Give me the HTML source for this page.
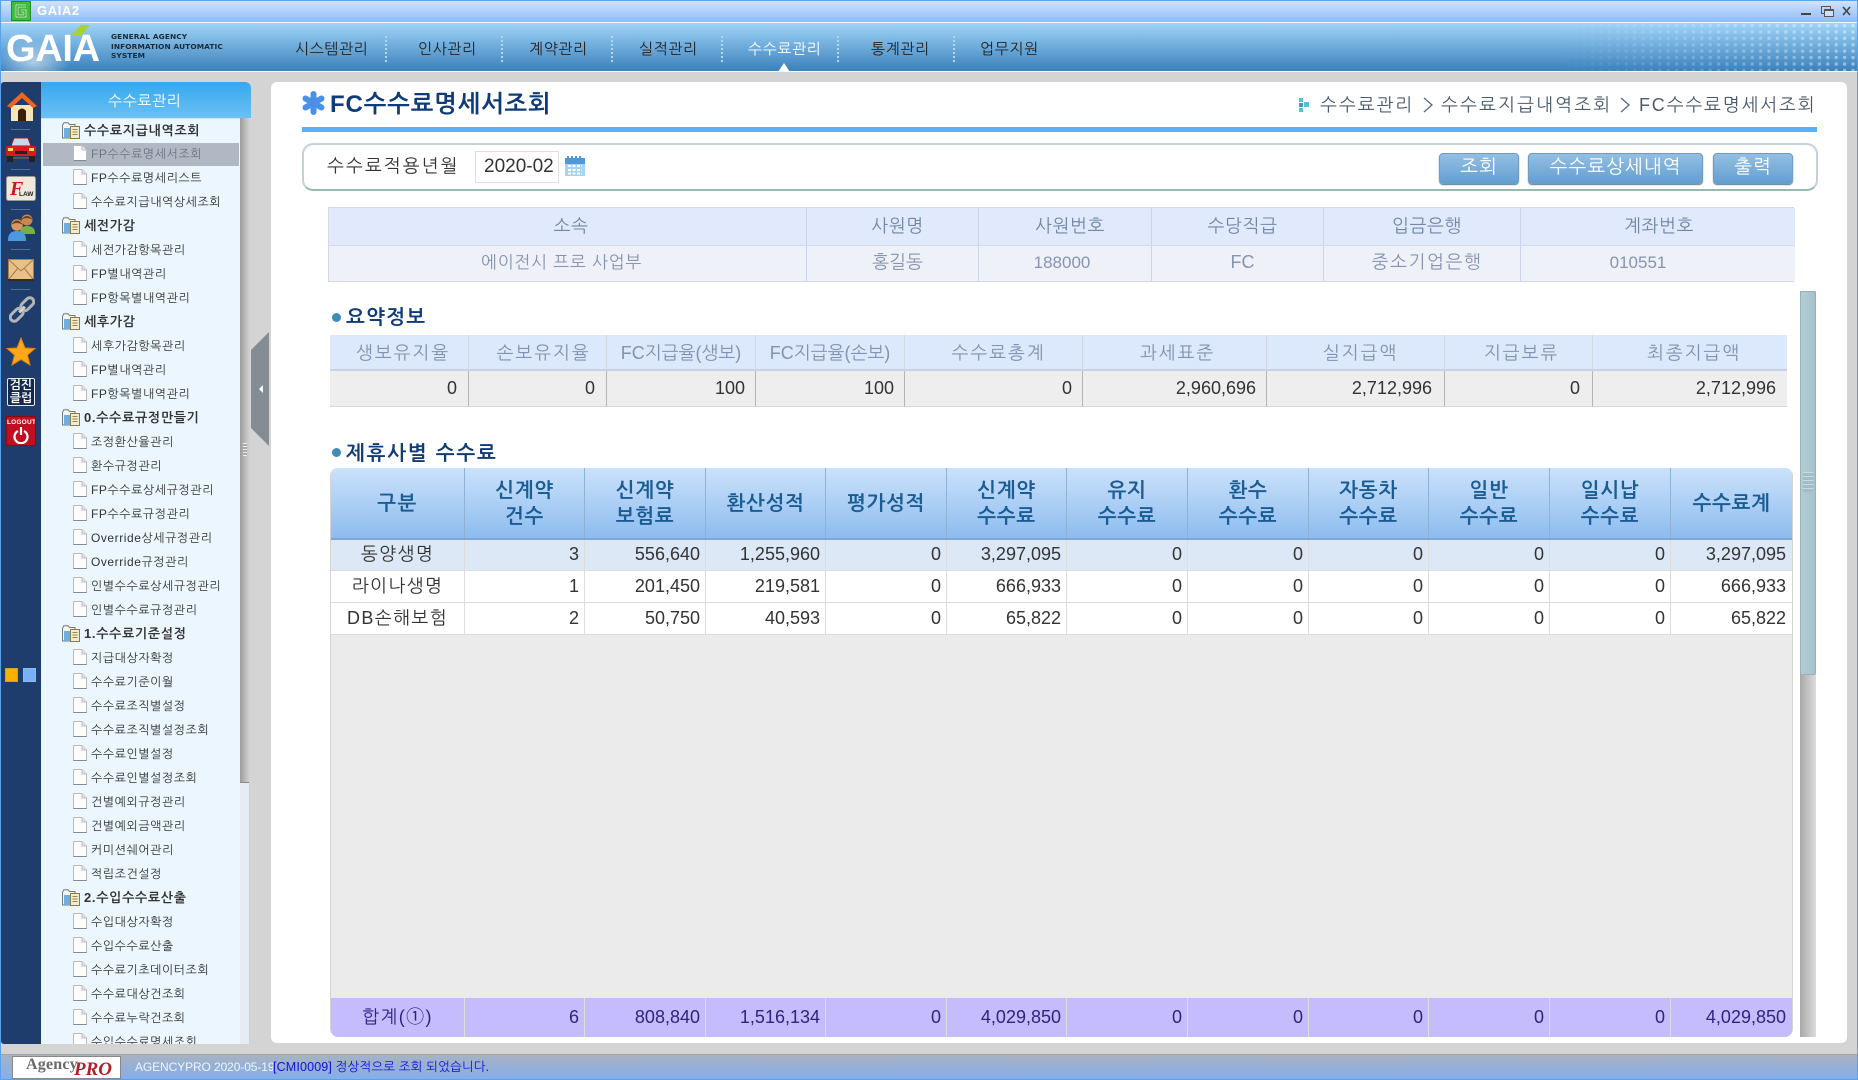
<!DOCTYPE html>
<html lang="ko"><head><meta charset="utf-8"><title>GAIA2</title>
<style>
*{box-sizing:border-box}
html,body{margin:0;padding:0;width:1858px;height:1080px;overflow:hidden;background:#d4d4d4;font-family:"Liberation Sans","NanumGothic","Noto Sans CJK KR",sans-serif;color:#333}
.a{position:absolute;white-space:nowrap}
.c{position:absolute;height:30px;line-height:30px;white-space:nowrap}
.m{font-size:15px;color:#222;top:35px;letter-spacing:.6px}
.sep{position:absolute;top:36px;height:26px;width:0;border-left:2px dotted #b8d4ea}
#tree{position:absolute;left:41px;top:119px;width:199px;height:925px;background:#ebf6ff;overflow:hidden}
#tree div{height:24px;line-height:24px;white-space:nowrap;position:relative;font-size:12px;padding-left:50px;color:#333;letter-spacing:.55px}
#tree div.h{font-size:13px;font-weight:bold;padding-left:43px;color:#333;letter-spacing:.7px}
#tree svg{position:absolute}
#tree div svg{left:32px;top:3px}
#tree div.h svg{left:21px;top:3px}
.g{position:absolute;display:grid}
.g>div{overflow:hidden;white-space:nowrap}
#info{left:328px;top:207px;width:1466px;grid-template-columns:477px 172px 173px 172px 197px 275px;background:#e0eafc;border:1px solid #d4dae4;font-size:18px;color:#7286a8}
#info>div{text-align:center;padding-left:10px;border-left:1px solid #cdd6e4}
#info .h{height:38px;line-height:36px;background:#e0eafc;border-bottom:1px solid #d4dcec;letter-spacing:.6px}
#info .d{height:35px;line-height:33px;background:#eef1f8;color:#8694ae}
#sum{left:330px;top:335px;width:1457px;grid-template-columns:138px 138px 149px 149px 178px 184px 178px 148px 195px;font-size:18px}
#sum>div{border-left:1px solid #d2d8e2}
#sum .h{height:36px;line-height:36px;background:#dce8fb;color:#8292b2;text-align:center;letter-spacing:1.900px;border-bottom:2px solid #c8d2e0}
#sum .d{height:36px;line-height:34px;background:#eeeeee;text-align:right;padding-right:10px;color:#333;border-left:1px solid #b4b4b4;border-bottom:1px solid #d8d8d8}
#grid{left:330px;top:468px;width:1463px;height:569px;background:#ebebeb;border-left:1px solid #d4d4d4;border-right:1px solid #d4d4d4;border-radius:8px;overflow:hidden}
.row{position:absolute;left:0;width:1463px;display:grid;grid-template-columns:133px 120px 121px 120px 121px 120px 121px 121px 120px 121px 121px 122px}
.row>div{white-space:nowrap;overflow:hidden;border-left:1px solid #ddd;text-align:right;padding-right:5px;font-size:18px;color:#333}
.row>div:first-child{text-align:center;padding-right:0;border-left:none;letter-spacing:1.400px}
.row>div:last-child{padding-right:6px}
.hd{top:0;height:72px;background:linear-gradient(#cbe2fb,#8dbcef);border-bottom:2px solid #7fa8d0}
.hd>div{display:flex;flex-direction:column;justify-content:center;align-items:center;padding:2px 0 0 !important;border-left:1px solid #8fb2d4;font-size:20px;font-weight:bold;color:#1c5c94;line-height:26px;text-align:center;letter-spacing:.7px}
.r{height:32px;line-height:30px;background:#fff;border-bottom:1px solid #dcdcdc}
.t{top:530px;height:39px;line-height:39px;background:#c4bcfc}
.t>div{color:#2e2380;border-left:1px solid #dcdcd8}
.btn{position:absolute;top:153px;height:31px;line-height:28px;text-align:center;color:#fff;font-size:19px;border-radius:4px;background:linear-gradient(#94bfe2,#629fd2);border:1px solid #6f9cc2;box-shadow:0 1px 1px #5a7a9c;letter-spacing:1px}
.hr{position:absolute;left:11px;width:19px;height:1px;background:#56708f}
</style></head>
<body>
<svg width="0" height="0" style="position:absolute"><defs>
<symbol id="doc" viewBox="0 0 14 16"><path d="M.5.5H9L13.500 5V15.500H.5Z" fill="#fdfdfd" stroke="#bbb"/><path d="M9 .5V5H13.500" fill="#e8e8e8" stroke="#bbb"/><path d="M.5 15.500H13.500" stroke="#888"/></symbol>
<symbol id="fold" viewBox="0 0 18 17"><path d="M.5 16V3L2 .8H6L7.500 2.500H13V16Z" fill="#f4f4f4" stroke="#777"/><path d="M2 16V6H8V16Z" fill="#6cb0e0"/><rect x="8.500" y="4.500" width="9" height="12" fill="#f4ecc8" stroke="#8a7a48"/><path d="M10.500 7.500H15.500M10.500 10H15.500M10.500 12.500H15.500" stroke="#908860"/></symbol>
<pattern id="dots" width="8.400" height="6.400" patternUnits="userSpaceOnUse"><circle cx="3" cy="2.600" r="1.700" fill="#fff"/></pattern>
<linearGradient id="fade" x1="0" x2="1" y1="0" y2="0"><stop offset="0" stop-color="#fff" stop-opacity="0"/><stop offset=".7" stop-color="#fff" stop-opacity=".3"/><stop offset="1" stop-color="#fff" stop-opacity=".45"/></linearGradient>
<mask id="dm"><rect width="300" height="48" fill="url(#fade)"/></mask>
</defs></svg>

<!-- frame -->
<div class="a" style="left:0;top:0;width:1px;height:1080px;background:#5aa0ea;z-index:9"></div>
<div class="a" style="left:1857px;top:0;width:1px;height:1080px;background:#5aa0ea;z-index:9"></div>

<!-- title bar -->
<div class="a" style="left:0;top:0;width:1858px;height:23px;background:linear-gradient(#cfe2fd,#8fbcf8);border-top:1px solid #5aa6ee;border-bottom:1px solid #eef6ff"></div>
<svg class="a" style="left:11px;top:1px" width="20" height="20" viewBox="0 0 20 20"><rect x=".5" y=".5" width="19" height="19" fill="#3cc03c" stroke="#1f9020"/><path d="M15 5H6V15H14V10H10" fill="none" stroke="#d8f8c8" stroke-width="2.800"/><path d="M15 5H6V15H14V10H10" fill="none" stroke="#157a20" stroke-width="1"/></svg>
<div class="a" style="left:37px;top:3px;line-height:16px;font-size:13px;font-weight:bold;color:#fff;letter-spacing:.6px">GAIA2</div>
<svg class="a" style="left:1800px;top:4px" width="54" height="16" viewBox="0 0 54 16"><path d="M1 10H11" stroke="#444" stroke-width="2"/><rect x="21.500" y="2.500" width="9" height="7" fill="none" stroke="#555"/><rect x="24.500" y="5.500" width="9" height="7" fill="#cfe0f8" stroke="#555"/><path d="M24.500 6.500H33.500" stroke="#555"/><path d="M43 3L50 11M50 3L43 11" stroke="#444" stroke-width="1.600"/></svg>

<!-- header -->
<div class="a" style="left:0;top:23px;width:1858px;height:49px;background:linear-gradient(#a0d4f9,#3b81bc);border-bottom:1px solid #fff"></div>
<svg class="a" style="left:1556px;top:23px" width="300" height="48"><rect width="300" height="48" fill="url(#dots)" mask="url(#dm)"/></svg>
<div class="a" style="left:0;top:32px;width:70px;height:40px;background:radial-gradient(ellipse 36px 22px at 34px 30px,rgba(255,255,255,.55),rgba(255,255,255,0))"></div>
<div class="a" style="left:6px;top:25px;height:44px;line-height:48px;font-size:38px;font-weight:bold;color:#fff;letter-spacing:-.3px">GAIA</div>
<svg class="a" style="left:66px;top:24px" width="28" height="14"><path d="M4 12L15 1H24L15 12Z" fill="#a8d038"/></svg>
<div class="a" style="left:111px;top:32px;font-size:7.400px;line-height:9.500px;font-family:'DejaVu Sans',sans-serif;font-weight:bold;color:#1a2a38;letter-spacing:.1px">GENERAL AGENCY<br>INFORMATION AUTOMATIC<br>SYSTEM</div>
<div class="c m" style="left:295px">시스템관리</div>
<div class="sep" style="left:385px"></div>
<div class="c m" style="left:418px">인사관리</div>
<div class="sep" style="left:501px"></div>
<div class="c m" style="left:529px">계약관리</div>
<div class="sep" style="left:611px"></div>
<div class="c m" style="left:639px">실적관리</div>
<div class="sep" style="left:721px"></div>
<div class="c m" style="left:748px;color:#fff">수수료관리</div>
<div class="sep" style="left:837px"></div>
<div class="c m" style="left:871px">통계관리</div>
<div class="sep" style="left:953px"></div>
<div class="c m" style="left:980px">업무지원</div>
<svg class="a" style="left:777px;top:62px" width="14" height="10"><path d="M1 10L7 1L13 10Z" fill="#fff"/></svg>

<!-- icon strip -->
<div class="a" style="left:1px;top:82px;width:40px;height:962px;background:#1e3c6c;border-radius:3px 0 0 3px"></div>
<svg class="a" style="left:7px;top:91px" width="30" height="31" viewBox="0 0 30 31"><path d="M4 14H26V30H4Z" fill="#f5e4b8"/><path d="M11 30V20Q15 15 19 20V30Z" fill="#3a1c10"/><path d="M0 15L15 1L30 15L26 17L15 7L4 17Z" fill="#f0641c"/></svg>
<div class="hr" style="top:129px"></div>
<svg class="a" style="left:5px;top:136px" width="32" height="27" viewBox="0 0 32 27"><path d="M6 10L9 2H23L26 10Z" fill="#c8d8e8" stroke="#a01818"/><rect x="1" y="10" width="30" height="10" rx="2" fill="#d81c1c"/><rect x="3" y="12" width="5" height="3" fill="#ffe060"/><rect x="24" y="12" width="5" height="3" fill="#ffe060"/><rect x="10" y="15" width="12" height="3" fill="#222"/><rect x="2" y="20" width="6" height="6" fill="#222"/><rect x="24" y="20" width="6" height="6" fill="#222"/><rect x="8" y="21" width="16" height="2" fill="#555"/></svg>
<div class="hr" style="top:169px"></div>
<svg class="a" style="left:6px;top:176px" width="30" height="25" viewBox="0 0 30 25"><rect x=".5" y=".5" width="29" height="24" rx="2" fill="#efe9dc" stroke="#999"/><text x="4" y="19" font-size="20" font-weight="bold" font-style="italic" fill="#c81818" font-family="Liberation Serif">F</text><text x="13" y="20" font-size="6.500" font-weight="bold" fill="#222" font-family="Liberation Sans">LAW</text></svg>
<div class="hr" style="top:209px"></div>
<svg class="a" style="left:7px;top:213px" width="29" height="29" viewBox="0 0 29 29"><circle cx="20" cy="7" r="5.500" fill="#c88850"/><path d="M14 7Q20 -1 26 7Q20 3 14 7Z" fill="#6a3c18"/><path d="M13 20Q13 13 20 13Q28 13 28 20V21H13Z" fill="#78b048"/><circle cx="10" cy="12" r="5.800" fill="#d89860"/><path d="M4 12Q10 3 16 12Q10 8 4 12Z" fill="#6a3c18"/><path d="M1 27Q1 18 10 18Q19 18 19 27V28H1Z" fill="#4c98e0"/></svg>
<div class="hr" style="top:249px"></div>
<svg class="a" style="left:8px;top:259px" width="26" height="22" viewBox="0 0 26 22"><rect x=".5" y=".5" width="25" height="20" fill="#e8c088" stroke="#a88050"/><path d="M1 1L13 12L25 1M1 20L10 9M25 20L16 9" fill="none" stroke="#a87c48"/><rect y="20" width="26" height="2" fill="#3a2c1c"/></svg>
<div class="hr" style="top:289px"></div>
<svg class="a" style="left:9px;top:296px" width="26" height="27" viewBox="0 0 26 27"><g transform="rotate(-45 13 13.500)" fill="none" stroke="#b4b4b4" stroke-width="3"><rect x="-2" y="9.500" width="15" height="8" rx="4"/><rect x="13" y="9.500" width="15" height="8" rx="4"/><path d="M9 13.500H17" stroke="#d0d0d0"/></g></svg>
<svg class="a" style="left:6px;top:337px" width="30" height="29" viewBox="0 0 30 29"><path d="M15 1L19 11L29 11.500L21.500 18L24 28L15 22.500L6 28L8.500 18L1 11.500L11 11Z" fill="#fba818" stroke="#e88008"/></svg>
<div class="a" style="left:7px;top:378px;width:28px;height:28px;background:#12284e;border:1px solid #e8e8e8;border-radius:2px;color:#fff;font-size:12px;font-weight:bold;line-height:13px;text-align:center;padding-top:0">검진<br>클럽</div>
<div class="a" style="left:6px;top:416px;width:30px;height:30px;background:#c00f20;border:1px solid #8a0a14;overflow:hidden"><div class="a" style="left:0;width:28px;top:2px;text-align:center;font-size:6.500px;font-weight:bold;color:#fff;line-height:8px;letter-spacing:.2px">LOGOUT</div><svg class="a" style="left:6px;top:9px" width="16" height="18" viewBox="0 0 16 18"><path d="M5 5A6.500 6.500 0 1 0 11 5" fill="none" stroke="#fff" stroke-width="2.200"/><path d="M8 1V9" stroke="#fff" stroke-width="2.200"/></svg></div>
<div class="a" style="left:5px;top:668px;width:13px;height:14px;background:#fdb000;border:1px solid #d0a030"></div>
<div class="a" style="left:23px;top:668px;width:13px;height:14px;background:#78b0fc;border:1px solid #9ab8dc"></div>

<!-- menu panel -->
<div class="a" style="left:41px;top:82px;width:210px;height:37px;background:linear-gradient(#35a8ee,#6cc0f4);border-radius:0 6px 0 0;border-bottom:1px solid #cde6fa"></div>
<div class="c" style="left:108px;top:87px;font-size:15px;color:#fff;letter-spacing:.6px">수수료관리</div>
<div id="tree">
<div class="h"><svg width="18" height="17"><use href="#fold"/></svg>수수료지급내역조회</div>
<div style="background:#b0b8c4;margin:1px 1px 0 2px;height:23px;line-height:22px;padding-left:48px;color:#6c7684;top:-1px"><svg width="14" height="16" style="left:30px;top:2px"><use href="#doc"/></svg>FP수수료명세서조회</div>
<div style="margin-top:-1px"><svg width="14" height="16"><use href="#doc"/></svg>FP수수료명세리스트</div>
<div><svg width="14" height="16"><use href="#doc"/></svg>수수료지급내역상세조회</div>
<div class="h"><svg width="18" height="17"><use href="#fold"/></svg>세전가감</div>
<div><svg width="14" height="16"><use href="#doc"/></svg>세전가감항목관리</div>
<div><svg width="14" height="16"><use href="#doc"/></svg>FP별내역관리</div>
<div><svg width="14" height="16"><use href="#doc"/></svg>FP항목별내역관리</div>
<div class="h"><svg width="18" height="17"><use href="#fold"/></svg>세후가감</div>
<div><svg width="14" height="16"><use href="#doc"/></svg>세후가감항목관리</div>
<div><svg width="14" height="16"><use href="#doc"/></svg>FP별내역관리</div>
<div><svg width="14" height="16"><use href="#doc"/></svg>FP항목별내역관리</div>
<div class="h"><svg width="18" height="17"><use href="#fold"/></svg>0.수수료규정만들기</div>
<div><svg width="14" height="16"><use href="#doc"/></svg>조정환산율관리</div>
<div><svg width="14" height="16"><use href="#doc"/></svg>환수규정관리</div>
<div><svg width="14" height="16"><use href="#doc"/></svg>FP수수료상세규정관리</div>
<div><svg width="14" height="16"><use href="#doc"/></svg>FP수수료규정관리</div>
<div><svg width="14" height="16"><use href="#doc"/></svg>Override상세규정관리</div>
<div><svg width="14" height="16"><use href="#doc"/></svg>Override규정관리</div>
<div><svg width="14" height="16"><use href="#doc"/></svg>인별수수료상세규정관리</div>
<div><svg width="14" height="16"><use href="#doc"/></svg>인별수수료규정관리</div>
<div class="h"><svg width="18" height="17"><use href="#fold"/></svg>1.수수료기준설정</div>
<div><svg width="14" height="16"><use href="#doc"/></svg>지급대상자확정</div>
<div><svg width="14" height="16"><use href="#doc"/></svg>수수료기준이월</div>
<div><svg width="14" height="16"><use href="#doc"/></svg>수수료조직별설정</div>
<div><svg width="14" height="16"><use href="#doc"/></svg>수수료조직별설정조회</div>
<div><svg width="14" height="16"><use href="#doc"/></svg>수수료인별설정</div>
<div><svg width="14" height="16"><use href="#doc"/></svg>수수료인별설정조회</div>
<div><svg width="14" height="16"><use href="#doc"/></svg>건별예외규정관리</div>
<div><svg width="14" height="16"><use href="#doc"/></svg>건별예외금액관리</div>
<div><svg width="14" height="16"><use href="#doc"/></svg>커미션쉐어관리</div>
<div><svg width="14" height="16"><use href="#doc"/></svg>적립조건설정</div>
<div class="h"><svg width="18" height="17"><use href="#fold"/></svg>2.수입수수료산출</div>
<div><svg width="14" height="16"><use href="#doc"/></svg>수입대상자확정</div>
<div><svg width="14" height="16"><use href="#doc"/></svg>수입수수료산출</div>
<div><svg width="14" height="16"><use href="#doc"/></svg>수수료기초데이터조회</div>
<div><svg width="14" height="16"><use href="#doc"/></svg>수수료대상건조회</div>
<div><svg width="14" height="16"><use href="#doc"/></svg>수수료누락건조회</div>
<div><svg width="14" height="16"><use href="#doc"/></svg>수입수수료명세조회</div>
</div>
<!-- menu scrollbar -->
<div class="a" style="left:240px;top:118px;width:10px;height:926px;background:#e4ecf4;border-right:1px solid #b8d4f0"></div>
<div class="a" style="left:240px;top:118px;width:9px;height:665px;background:linear-gradient(90deg,#9c9c9c,#d0d0d0);border-bottom:1px solid #888"></div>
<div class="a" style="left:243px;top:443px;width:4px;height:13px;background:repeating-linear-gradient(#eee 0 1px,#aaa 1px 3px)"></div>
<!-- handle -->
<svg class="a" style="left:251px;top:332px" width="19" height="114"><path d="M0 18L18 0V114L0 96Z" fill="#848c94"/><path d="M8 57L12 53V61Z" fill="#fff"/></svg>

<!-- content -->
<div class="a" style="left:271px;top:82px;width:1576px;height:961px;background:#fff;border-radius:6px"></div>
<svg class="a" style="left:302px;top:91px" width="23" height="24" viewBox="0 0 23 24"><path d="M11.500 3V21M3.500 7.500L19.500 16.500M19.500 7.500L3.500 16.500" stroke="#4a90e8" stroke-width="6" stroke-linecap="round"/></svg>
<div class="c" style="left:330px;top:90px;font-size:24px;font-weight:bold;color:#0f3c78;letter-spacing:.9px">FC수수료명세서조회</div>
<svg class="a" style="left:1299px;top:97px" width="12" height="16"><rect x="0" y="1" width="4" height="4" fill="#58c0d8"/><rect x="0" y="11" width="4" height="4" fill="#58c0d8"/><rect x="0" y="6" width="4" height="4" fill="#4898c0"/><rect x="5" y="5" width="5" height="5" fill="#58c0d8"/></svg>
<div class="c" style="left:1320px;top:90px;font-size:18px;color:#4c5c6c;letter-spacing:1.900px">수수료관리</div>
<svg class="a" style="left:1422px;top:97px" width="12" height="16"><path d="M2 1L10 8L2 15" fill="none" stroke="#5a6a7a" stroke-width="1.300"/></svg>
<div class="c" style="left:1441px;top:90px;font-size:18px;color:#4c5c6c;letter-spacing:2.100px">수수료지급내역조회</div>
<svg class="a" style="left:1619px;top:97px" width="12" height="16"><path d="M2 1L10 8L2 15" fill="none" stroke="#5a6a7a" stroke-width="1.300"/></svg>
<div class="c" style="left:1639px;top:90px;font-size:18px;color:#4c5c6c;letter-spacing:1.800px">FC수수료명세서조회</div>
<div class="a" style="left:302px;top:127px;width:1515px;height:5px;background:#5cb0f8"></div>

<div class="a" style="left:302px;top:143px;width:1516px;height:48px;border:2px solid #c4d0dc;border-bottom-color:#98b8b0;border-radius:11px;background:#fff"></div>
<div class="c" style="left:327px;top:151px;font-size:18px;color:#333;letter-spacing:2px">수수료적용년월</div>
<div class="a" style="left:475px;top:151px;width:84px;height:32px;border:1px solid #e0e0e0;line-height:30px;font-size:19px;padding-left:8px;background:#fff;color:#333;white-space:nowrap">2020-02</div>
<svg class="a" style="left:565px;top:155px" width="20" height="21" viewBox="0 0 20 21"><rect x="0" y="3" width="20" height="18" fill="#a8d4f4"/><rect width="20" height="6" y="3" fill="#5098dc"/><path d="M3 1V5M7 1V5M11 1V5M15 1V5" stroke="#5098dc" stroke-width="2"/><path d="M3 11H17M3 15H17M3 18.500H17" stroke="#fff" stroke-width="2" stroke-dasharray="3 1.500"/></svg>
<div class="btn" style="left:1439px;width:80px">조회</div>
<div class="btn" style="left:1528px;width:175px">수수료상세내역</div>
<div class="btn" style="left:1713px;width:80px">출력</div>

<!-- info table -->
<div class="g" id="info">
<div class="h" style="border-left:none;padding-left:7px">소속</div><div class="h">사원명</div><div class="h">사원번호</div><div class="h">수당직급</div><div class="h">입금은행</div><div class="h"></div>
<div class="d" style="border-left:none;letter-spacing:.7px;font-size:17px;padding-left:0;padding-right:12px">에이전시 프로 사업부</div><div class="d">홍길동</div><div class="d" style="padding-left:0;padding-right:6px;font-size:17px">188000</div><div class="d">FC</div><div class="d" style="letter-spacing:1.600px">중소기업은행</div><div class="d" style="padding-left:0;padding-right:40px;font-size:17px">010551</div>
</div>
<div class="c" style="left:1624px;top:209px;height:35px;line-height:35px;font-size:18px;color:#7286a8;letter-spacing:.6px">계좌번호</div>

<!-- summary -->
<div class="a" style="left:332px;top:313px;width:9px;height:9px;border-radius:50%;background:#3f8cb8"></div>
<div class="c" style="left:346px;top:303px;font-size:20px;font-weight:bold;color:#0f3c78;letter-spacing:1.300px">요약정보</div>
<div class="g" id="sum">
<div class="h" style="padding-left:8px;border-left:none">생보유지율</div><div class="h" style="padding-left:12px">손보유지율</div><div class="h" style="letter-spacing:0">FC지급율(생보)</div><div class="h" style="letter-spacing:0">FC지급율(손보)</div><div class="h" style="padding-left:10px">수수료총계</div><div class="h" style="padding-left:6px">과세표준</div><div class="h" style="padding-left:10px">실지급액</div><div class="h" style="padding-left:6px">지급보류</div><div class="h" style="padding-left:8px">최종지급액</div>
<div class="d" style="border-left:none;padding-right:11px">0</div><div class="d" style="padding-right:11px">0</div><div class="d">100</div><div class="d">100</div><div class="d">0</div><div class="d">2,960,696</div><div class="d" style="padding-right:12px">2,712,996</div><div class="d" style="padding-right:12px">0</div><div class="d" style="padding-right:11px">2,712,996</div>
</div>

<!-- grid -->
<div class="a" style="left:332px;top:448px;width:9px;height:9px;border-radius:50%;background:#3f8cb8"></div>
<div class="c" style="left:346px;top:439px;font-size:20px;font-weight:bold;color:#0f3c78;letter-spacing:1.800px">제휴사별 수수료</div>
<div class="a" id="grid">
<div class="row hd"><div>구분</div><div>신계약<br>건수</div><div>신계약<br>보험료</div><div>환산성적</div><div>평가성적</div><div>신계약<br>수수료</div><div>유지<br>수수료</div><div>환수<br>수수료</div><div>자동차<br>수수료</div><div>일반<br>수수료</div><div>일시납<br>수수료</div><div>수수료계</div></div>
<div class="row r" style="top:72px;height:31px;line-height:28px;background:#dce8f6"><div>동양생명</div><div>3</div><div>556,640</div><div>1,255,960</div><div>0</div><div>3,297,095</div><div>0</div><div>0</div><div>0</div><div>0</div><div>0</div><div>3,297,095</div></div>
<div class="row r" style="top:103px"><div>라이나생명</div><div>1</div><div>201,450</div><div>219,581</div><div>0</div><div>666,933</div><div>0</div><div>0</div><div>0</div><div>0</div><div>0</div><div>666,933</div></div>
<div class="row r" style="top:135px"><div>DB손해보험</div><div>2</div><div>50,750</div><div>40,593</div><div>0</div><div>65,822</div><div>0</div><div>0</div><div>0</div><div>0</div><div>0</div><div>65,822</div></div>
<div class="row t"><div>합계(①)</div><div>6</div><div>808,840</div><div>1,516,134</div><div>0</div><div>4,029,850</div><div>0</div><div>0</div><div>0</div><div>0</div><div>0</div><div>4,029,850</div></div>
</div>
<!-- content scrollbar -->
<div class="a" style="left:1800px;top:291px;width:16px;height:746px;background:linear-gradient(90deg,#a8a8a8,#dcdcdc)"></div>
<div class="a" style="left:1800px;top:291px;width:16px;height:384px;background:linear-gradient(90deg,#b4ccd4,#a4c2cc);border:1px solid #9ab0b8;border-radius:2px"></div>
<div class="a" style="left:1803px;top:472px;width:10px;height:20px;background:repeating-linear-gradient(#c8dce2 0 1px,#a0bcc4 1px 4px)"></div>

<!-- status bar -->
<div class="a" style="left:0;top:1054px;width:1858px;height:26px;background:linear-gradient(#a8b2c2,#84aeea);border-top:1px solid #a4a4a4;border-bottom:1px solid #5aa0ea"></div>
<div class="a" style="left:12px;top:1056px;width:109px;height:23px;background:#fff;border:1px solid #888;overflow:hidden"><div class="a" style="left:13px;top:-2px;font-family:'Liberation Serif',serif;font-weight:bold;font-size:16px;line-height:20px;color:#6a6a6a;letter-spacing:.2px">Agency</div><div class="a" style="left:61px;top:1px;font-family:'Liberation Serif',serif;font-style:italic;font-weight:bold;font-size:19px;line-height:24px;color:#b02028">PRO</div></div>
<div class="a" style="left:135px;top:1058px;width:138px;overflow:hidden;line-height:18px;font-size:12px;color:#eef4ff;letter-spacing:-.1px">AGENCYPRO 2020-05-19</div>
<div class="a" style="left:273px;top:1058px;line-height:18px;font-size:12.500px;color:#1010d8;letter-spacing:.15px">[CMI0009] 정상적으로 조회 되었습니다.</div>
</body></html>
